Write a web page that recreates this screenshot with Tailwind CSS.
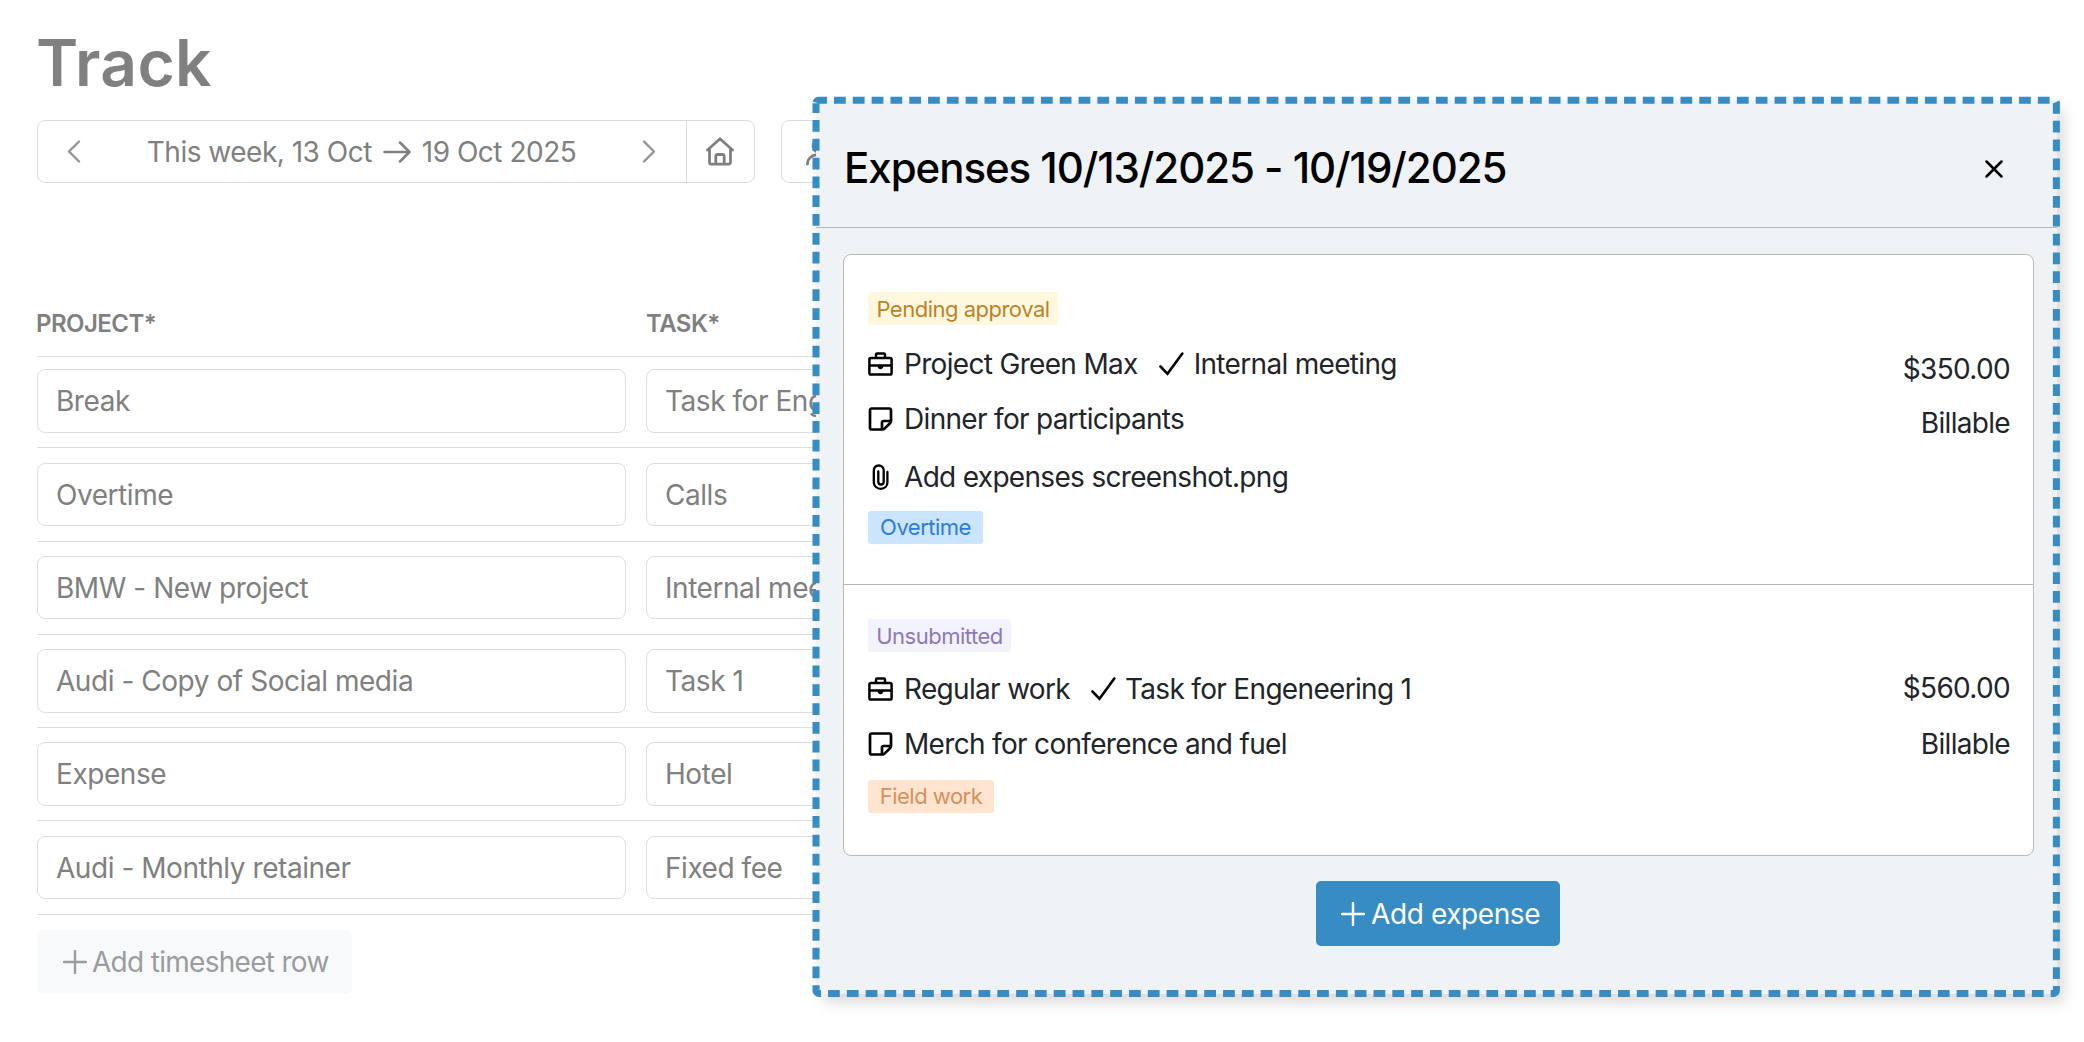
<!DOCTYPE html>
<html lang="en">
<head>
  <meta charset="UTF-8" />
  <meta name="viewport" content="width=device-width, initial-scale=1.0"/>
  <title>Track</title>
  <script src="https://cdn.jsdelivr.net/npm/@tailwindcss/browser@4"></script>
</head>
<body class="bg-white font-[Inter,sans-serif] overflow-hidden">

  <!-- Icons -->
  <svg class="hidden">
    <symbol id="briefcase" viewBox="0 0 25 24">
      <g fill="none" stroke="currentColor" stroke-width="2.5" stroke-linejoin="round">
        <rect x="1.4" y="6" width="22.2" height="16.6" rx="1.6"/>
        <path d="M8 6V2.6a1.2 1.2 0 0 1 1.2-1.2h6.6A1.2 1.2 0 0 1 17 2.6V6M1.4 13.6h22.2"/>
      </g>
      <path d="M9.5 14h6c0 2-1.3 3.2-3 3.2s-3-1.2-3-3.2z" fill="currentColor"/>
    </symbol>
    <symbol id="check" viewBox="0 0 25 24">
      <path d="M1.5 14.5 8.5 21.8 23.3 1.5" fill="none" stroke="currentColor" stroke-width="2.6" stroke-linecap="round"/>
    </symbol>
    <symbol id="note" viewBox="0 0 25 24">
      <path d="M14.5 22.5H3.7A1.7 1.7 0 0 1 2 20.8V3.2a1.7 1.7 0 0 1 1.700-1.700h17.600A1.700 1.700 0 0 1 23 3.2V14c0 1-.4 1.600-1 2.300L16.500 21.600c-.6.6-1.200.9-2 .9zM14 22v-6.500a1.500 1.500 0 0 1 1.500-1.500H23" fill="none" stroke="currentColor" stroke-width="2.7" stroke-linejoin="round"/>
    </symbol>
    <symbol id="clip" viewBox="0 0 25 26">
      <path d="M19.400 8v10.500c0 3.600-2.800 6.300-6.600 6.300s-7-2.700-7-6.300V6.500c0-3 2-5 4.900-5s5 2 5 5v11.200c0 1.700-1.100 2.800-2.700 2.800s-2.700-1.100-2.700-2.800V7.500" fill="none" stroke="currentColor" stroke-width="2.3" stroke-linecap="round"/>
    </symbol>
    <symbol id="plus" viewBox="0 0 24 24">
      <path d="M12 1v22M1 12h22" fill="none" stroke="currentColor" stroke-width="2.4" stroke-linecap="round"/>
    </symbol>
  </svg>

  <div class="relative w-[2084px] h-[1042px] overflow-hidden">

    <!-- Timesheet -->
    <main class="pl-[37px] pt-[28px] w-[1300px] text-[#808080]">
      <h1 class="-ml-px text-[64px] leading-[70px] font-semibold tracking-[0.4px]">Track</h1>

      <div class="mt-[22px] flex gap-[26px] h-[63px]">
        <div class="flex w-[718px] border border-[#dcdcdc] rounded-lg">
          <div class="flex-1 flex items-center justify-between pl-[29px] pr-[30px]">
            <svg class="w-[14px] h-[23px] text-[#949494]" viewBox="0 0 14 23"><path d="M12 1.5 2 11.5 12 21.5" fill="none" stroke="currentColor" stroke-width="2.4" stroke-linecap="round" stroke-linejoin="round"/></svg>
            <div class="flex items-center gap-[11px] text-[28px] tracking-[-0.5px] whitespace-nowrap">
              <span>This week, 13 Oct</span>
              <svg class="w-[28px] h-[22px]" viewBox="0 0 28 22"><path d="M1.5 11h25M17 1.5 26.5 11 17 20.5" fill="none" stroke="currentColor" stroke-width="2.5" stroke-linecap="round" stroke-linejoin="round"/></svg>
              <span>19 Oct 2025</span>
            </div>
            <svg class="w-[14px] h-[23px] text-[#949494]" viewBox="0 0 14 23"><path d="M2 1.5 12 11.5 2 21.5" fill="none" stroke="currentColor" stroke-width="2.4" stroke-linecap="round" stroke-linejoin="round"/></svg>
          </div>
          <div class="w-[68px] border-l border-[#dcdcdc] flex items-center justify-center pr-[2px]">
            <svg class="w-[28px] h-[29px]" viewBox="0 0 28 29" fill="none" stroke="currentColor" stroke-width="2.8" stroke-linecap="round" stroke-linejoin="round"><path d="M1.5 13 14 1.8 26.500 13M3.500 11.500V25.300A1.800 1.800 0 0 0 5.300 27.100H22.700A1.800 1.800 0 0 0 24.500 25.300V11.500M9.800 27V19.500A2 2 0 0 1 11.800 17.500H16.200A2 2 0 0 1 18.200 19.500V27"/></svg>
          </div>
        </div>
        <div class="w-[200px] border border-[#dcdcdc] rounded-lg flex items-center pl-[24px]">
          <svg class="w-[28px] h-[28px]" viewBox="0 0 28 28" fill="none" stroke="currentColor" stroke-width="2.800" stroke-linecap="round"><circle cx="13.500" cy="8" r="6.500"/><path d="M1.500 26C1.500 20 6.500 16.500 13.500 16.500S25.500 20 25.500 26"/></svg>
        </div>
      </div>

      <div class="mt-[126px] h-[48px] flex border-b border-[#e0e0e0] text-[24px] leading-[30px] font-semibold tracking-[-0.55px]">
        <div class="w-[609px] -indent-px">PROJECT*</div>
        <div>TASK*</div>
      </div>

      <div class="text-[28px] tracking-[-0.45px]">
        <div class="h-[91px] pt-[12px] flex gap-[20px] border-b border-[#dedede]">
          <div class="w-[589px] h-[64px] border border-[#dedede] rounded-lg flex items-center pl-[18px]">Break</div>
          <div class="w-[560px] h-[64px] border border-[#dedede] rounded-lg flex items-center pl-[18px]">Task for Engeneering 1</div>
        </div>
        <div class="h-[94px] pt-[15px] flex gap-[20px] border-b border-[#dedede]">
          <div class="w-[589px] h-[63px] border border-[#dedede] rounded-lg flex items-center pl-[18px]">Overtime</div>
          <div class="w-[560px] h-[63px] border border-[#dedede] rounded-lg flex items-center pl-[18px]">Calls</div>
        </div>
        <div class="h-[93px] pt-[14px] flex gap-[20px] border-b border-[#dedede]">
          <div class="w-[589px] h-[63px] border border-[#dedede] rounded-lg flex items-center pl-[18px]">BMW - New project</div>
          <div class="w-[560px] h-[63px] border border-[#dedede] rounded-lg flex items-center pl-[18px]">Internal meeting</div>
        </div>
        <div class="h-[93px] pt-[14px] flex gap-[20px] border-b border-[#dedede]">
          <div class="w-[589px] h-[64px] border border-[#dedede] rounded-lg flex items-center pl-[18px]">Audi - Copy of Social media</div>
          <div class="w-[560px] h-[64px] border border-[#dedede] rounded-lg flex items-center pl-[18px]">Task 1</div>
        </div>
        <div class="h-[93px] pt-[14px] flex gap-[20px] border-b border-[#dedede]">
          <div class="w-[589px] h-[64px] border border-[#dedede] rounded-lg flex items-center pl-[18px]">Expense</div>
          <div class="w-[560px] h-[64px] border border-[#dedede] rounded-lg flex items-center pl-[18px]">Hotel</div>
        </div>
        <div class="h-[94px] pt-[15px] flex gap-[20px] border-b border-[#dedede]">
          <div class="w-[589px] h-[63px] border border-[#dedede] rounded-lg flex items-center pl-[18px]">Audi - Monthly retainer</div>
          <div class="w-[560px] h-[63px] border border-[#dedede] rounded-lg flex items-center pl-[18px]">Fixed fee</div>
        </div>
      </div>

      <button class="mt-[15px] w-[315px] h-[64px] rounded-md bg-[#f7f9fb] text-[#9b9c9d] text-[28px] tracking-[-0.7px] flex items-center pl-[26px] gap-[5px] whitespace-nowrap">
        <svg class="w-[24px] h-[24px]"><use href="#plus"/></svg>Add timesheet row
      </button>
    </main>

    <!-- Expenses dialog -->
    <section class="absolute left-[816px] top-[100px] w-[1241px] h-[894px] rounded bg-[#eff3f6] shadow-[7px_9px_14px_rgba(0,0,0,0.14)]">
      <svg class="absolute -left-[5px] -top-[5px] w-[1252px] h-[904px]" viewBox="0 0 1252 904">
        <path d="M5 8.300a3 3 0 0 1 3-3H1242.400a3 3 0 0 1 3 3V895.500a3 3 0 0 1-3 3H8a3 3 0 0 1-3-3z" fill="none" stroke="#378dc3" stroke-width="7.050" stroke-dasharray="11.760 7.050" stroke-dashoffset="-0.800"/>
      </svg>
      <header class="relative h-[128px] border-b border-[#b4b8bb] pl-[28px] pr-[54px] flex items-center justify-between">
        <h2 class="pt-[8px] text-[42px] font-medium tracking-[-1.05px] text-black whitespace-nowrap">Expenses 10/13/2025 - 10/19/2025</h2>
        <svg class="w-[18px] h-[18px] mt-[10px]" viewBox="0 0 18 18"><path d="M1.500 1.500 16.500 16.500M16.500 1.500 1.500 16.500" fill="none" stroke="#000" stroke-width="2.500" stroke-linecap="round"/></svg>
      </header>

      <div class="relative ml-[27px] mt-[26px] w-[1191px] h-[602px] rounded-lg border border-[#b9b9b9] bg-white text-[28px] tracking-[-0.68px] text-[#212529]">
        <article class="h-[330px] border-b border-[#b5b5b5] flex justify-between pl-[24px] pr-[23px]">
          <div class="pt-[37px] flex flex-col items-start">
            <span class="h-[33px] w-[190px] rounded-[3px] bg-[#fff8df] text-[#bd8326] text-[22px] tracking-[-0.5px] leading-[35px] text-center">Pending approval</span>
            <div class="mt-[20px] h-[38px] flex items-center leading-[38px] whitespace-nowrap">
              <svg class="w-[25px] h-[24px] mr-[11px] text-black"><use href="#briefcase"/></svg>Project Green Max
              <svg class="w-[25px] h-[24px] ml-[21px] mr-[10px] text-black"><use href="#check"/></svg>Internal meeting
            </div>
            <div class="mt-[17px] h-[38px] flex items-center leading-[38px]">
              <svg class="w-[25px] h-[24px] mr-[11px] text-black"><use href="#note"/></svg>Dinner for participants
            </div>
            <div class="mt-[20px] h-[38px] flex items-center leading-[38px]">
              <svg class="w-[25px] h-[26px] mr-[11px] text-black"><use href="#clip"/></svg>Add expenses screenshot.png
            </div>
            <span class="mt-[15px] h-[33px] w-[115px] rounded-[3px] bg-[#cce5ff] text-[#2e7cd6] text-[22px] tracking-[-0.5px] leading-[33px] text-center">Overtime</span>
          </div>
          <div class="pt-[95px] text-right leading-[38px]">
            <p>$350.00</p>
            <p class="mt-[16px]">Billable</p>
          </div>
        </article>

        <article class="flex justify-between pl-[24px] pr-[23px]">
          <div class="pt-[34px] flex flex-col items-start">
            <span class="h-[33px] w-[143px] rounded-[3px] bg-[#f3f3fd] text-[#8c79b8] text-[22px] tracking-[-0.5px] leading-[35px] text-center">Unsubmitted</span>
            <div class="mt-[18px] h-[38px] flex items-center leading-[38px] whitespace-nowrap">
              <svg class="w-[25px] h-[24px] mr-[11px] text-black"><use href="#briefcase"/></svg>Regular work
              <svg class="w-[25px] h-[24px] ml-[21px] mr-[9px] text-black"><use href="#check"/></svg>Task for Engeneering 1
            </div>
            <div class="mt-[17px] h-[38px] flex items-center leading-[38px]">
              <svg class="w-[25px] h-[24px] mr-[11px] text-black"><use href="#note"/></svg>Merch for conference and fuel
            </div>
            <span class="mt-[17px] h-[33px] w-[126px] rounded-[3px] bg-[#ffe5d0] text-[#d5915f] text-[22px] tracking-[-0.5px] leading-[33px] text-center">Field work</span>
          </div>
          <div class="pt-[84px] text-right leading-[38px]">
            <p>$560.00</p>
            <p class="mt-[18px]">Billable</p>
          </div>
        </article>
      </div>

      <button class="relative mt-[25px] ml-[500px] w-[244px] h-[65px] rounded-[5px] bg-[#378dc3] text-white text-[28px] tracking-[-0.4px] flex items-center pl-[25px] gap-[6px] whitespace-nowrap">
        <svg class="w-[24px] h-[24px]"><use href="#plus"/></svg>Add expense
      </button>
    </section>
  </div>

</body>
</html>
